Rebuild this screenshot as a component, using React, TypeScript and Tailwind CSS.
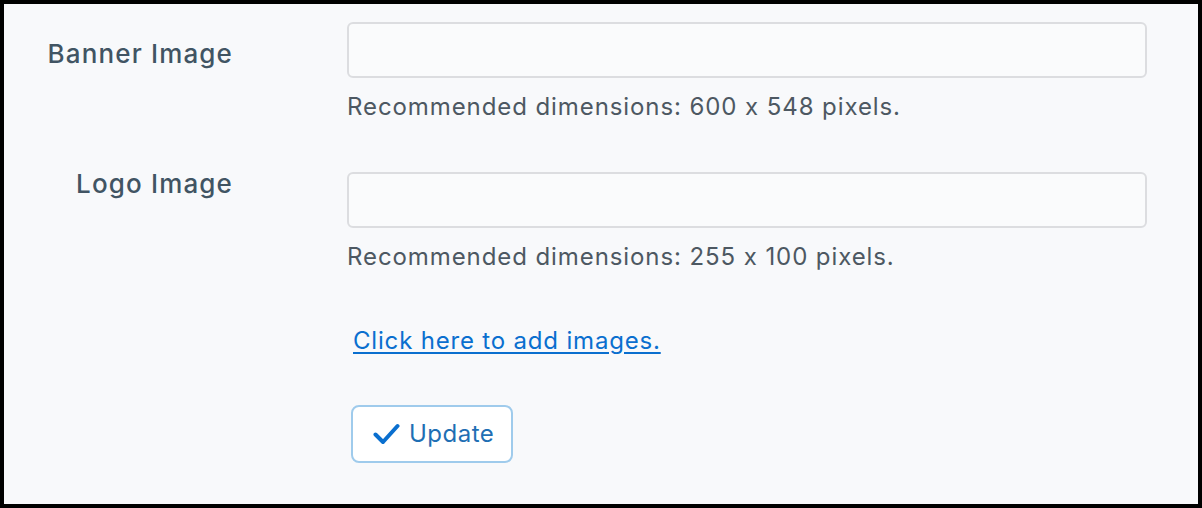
export default function App() {
  return (
    <div className="h-[508px] w-[1202px] border-4 border-black bg-[#f8f9fb] font-['Inter',sans-serif] tracking-[0.03em] [font-feature-settings:'calt'_0]">
      <div className="pt-[18px]">
        <FieldRow label="Banner Image" labelOffset="mt-[16px]" hint="Recommended dimensions: 600 x 548 pixels." />
        <div className="h-[50px]" />
        <FieldRow label="Logo Image" labelOffset="mt-[-4px]" hint="Recommended dimensions: 255 x 100 pixels." />
        <div className="flex">
          <div className="w-[343px] shrink-0" />
          <div className="flex flex-col items-start">
            <a href="#" className="mt-[54px] ml-[6px] text-[24px] leading-[30px] tracking-[0.034em] text-[#0a6fcf] underline underline-offset-[3px]">
              Click here to add images.
            </a>
            <button className="mt-[49px] ml-[4px] flex h-[58px] w-[162px] items-center gap-[9px] rounded-[8px] border-2 border-[#9fcbec] bg-white pl-[20px] text-[24px] text-[#1f6fb4]">
              <svg width="27" height="22" viewBox="0 0 27 22" fill="none">
                <path d="M2.5 11.5 L10 19 L24.5 3" stroke="#0a6fcf" strokeWidth="4" strokeLinecap="round" strokeLinejoin="round" />
              </svg>
              Update
            </button>
          </div>
        </div>
      </div>
    </div>
  );
}

function FieldRow({ label, labelOffset, hint }: { label: string; labelOffset: string; hint: string }) {
  return (
    <div className="flex">
      <div className={`w-[229px] shrink-0 text-right text-[26px] font-medium leading-[32px] tracking-[0.044em] text-[#415463] ${labelOffset}`}>
        {label}
      </div>
      <div className="ml-[114px] flex flex-col">
        <input className="h-[56px] w-[800px] rounded-[6px] border-2 border-[#dcdde0] bg-[#fafbfc] px-3 outline-none" />
        <p className="mt-[14px] text-[24px] leading-[30px] tracking-[0.038em] text-[#4d5862]">{hint}</p>
      </div>
    </div>
  );
}
